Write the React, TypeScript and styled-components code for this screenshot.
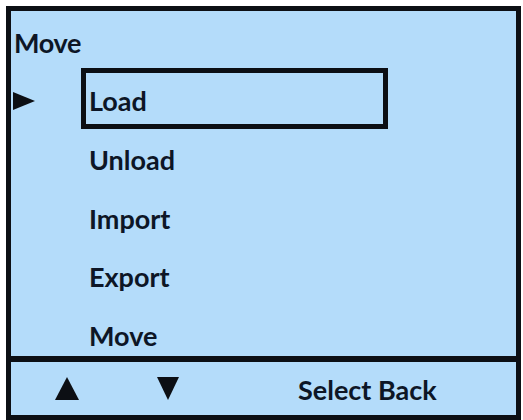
import styled, { createGlobalStyle } from "styled-components"

const GlobalStyle = createGlobalStyle`
  html, body {
    margin: 0;
    padding: 0;
    background: #ffffff;
  }
  body {
    font-family: Lato, "Open Sans", sans-serif;
  }
`

const Frame = styled.div`
  box-sizing: border-box;
  margin: 6px 0 0 6px;
  width: 515px;
  height: 414px;
  border: 5px solid #0c0f14;
  background-color: #b4dcfa;
  display: flex;
  flex-direction: column;
  color: #0d1626;
  font-weight: 700;
  font-size: 27px;
`

const Screen = styled.div`
  height: 345px;
  overflow: hidden;
  flex-shrink: 0;
`

const Title = styled.div`
  box-sizing: border-box;
  height: 59px;
  padding: 20px 0 0 3px;
  line-height: 24px;
  letter-spacing: -0.3px;
`

const MenuList = styled.ul`
  list-style: none;
  margin: 0;
  padding: 0;
`

const MenuRow = styled.li`
  height: 58.75px;
  display: grid;
  grid-template-columns: 70px 307px;
  align-items: center;
`

const Pointer = styled.svg`
  margin-left: 2px;
  margin-top: 3px;
`

const ItemLabel = styled.div<{ selected?: boolean }>`
  box-sizing: border-box;
  height: 61px;
  margin: -2px 0 0;
  padding: 4px 0 0 3px;
  display: flex;
  align-items: center;
  border: 5px solid ${({ selected }) => (selected ? "#0c0f14" : "transparent")};
`

const Footer = styled.div`
  flex: 1;
  border-top: 6px solid #0c0f14;
  display: flex;
  align-items: center;
  padding-left: 44px;
`

const SoftKey = styled.svg<{ gap: number }>`
  margin-right: ${({ gap }) => gap}px;
`

const FooterText = styled.span`
  line-height: 24px;
  margin-top: 2px;
`

const items = ["Load", "Unload", "Import", "Export", "Move"]

export default function App() {
  const selected = 0

  return (
    <>
      <GlobalStyle />
      <Frame>
        <Screen>
          <Title>Move</Title>
          <MenuList>
            {items.map((item, i) => (
              <MenuRow key={item}>
                {i === selected ? (
                  <Pointer width="22" height="18" viewBox="0 0 22 18">
                    <polygon points="0,0 22,9 0,18" fill="#0c0f14" />
                  </Pointer>
                ) : (
                  <span />
                )}
                <ItemLabel selected={i === selected}>{item}</ItemLabel>
              </MenuRow>
            ))}
          </MenuList>
        </Screen>
        <Footer>
          <SoftKey gap={78} width="24" height="23" viewBox="0 0 24 23">
            <polygon points="12,0 24,23 0,23" fill="#0c0f14" />
          </SoftKey>
          <SoftKey gap={119} width="22" height="23" viewBox="0 0 22 23">
            <polygon points="0,0 22,0 11,23" fill="#0c0f14" />
          </SoftKey>
          <FooterText>Select Back</FooterText>
        </Footer>
      </Frame>
    </>
  )
}
